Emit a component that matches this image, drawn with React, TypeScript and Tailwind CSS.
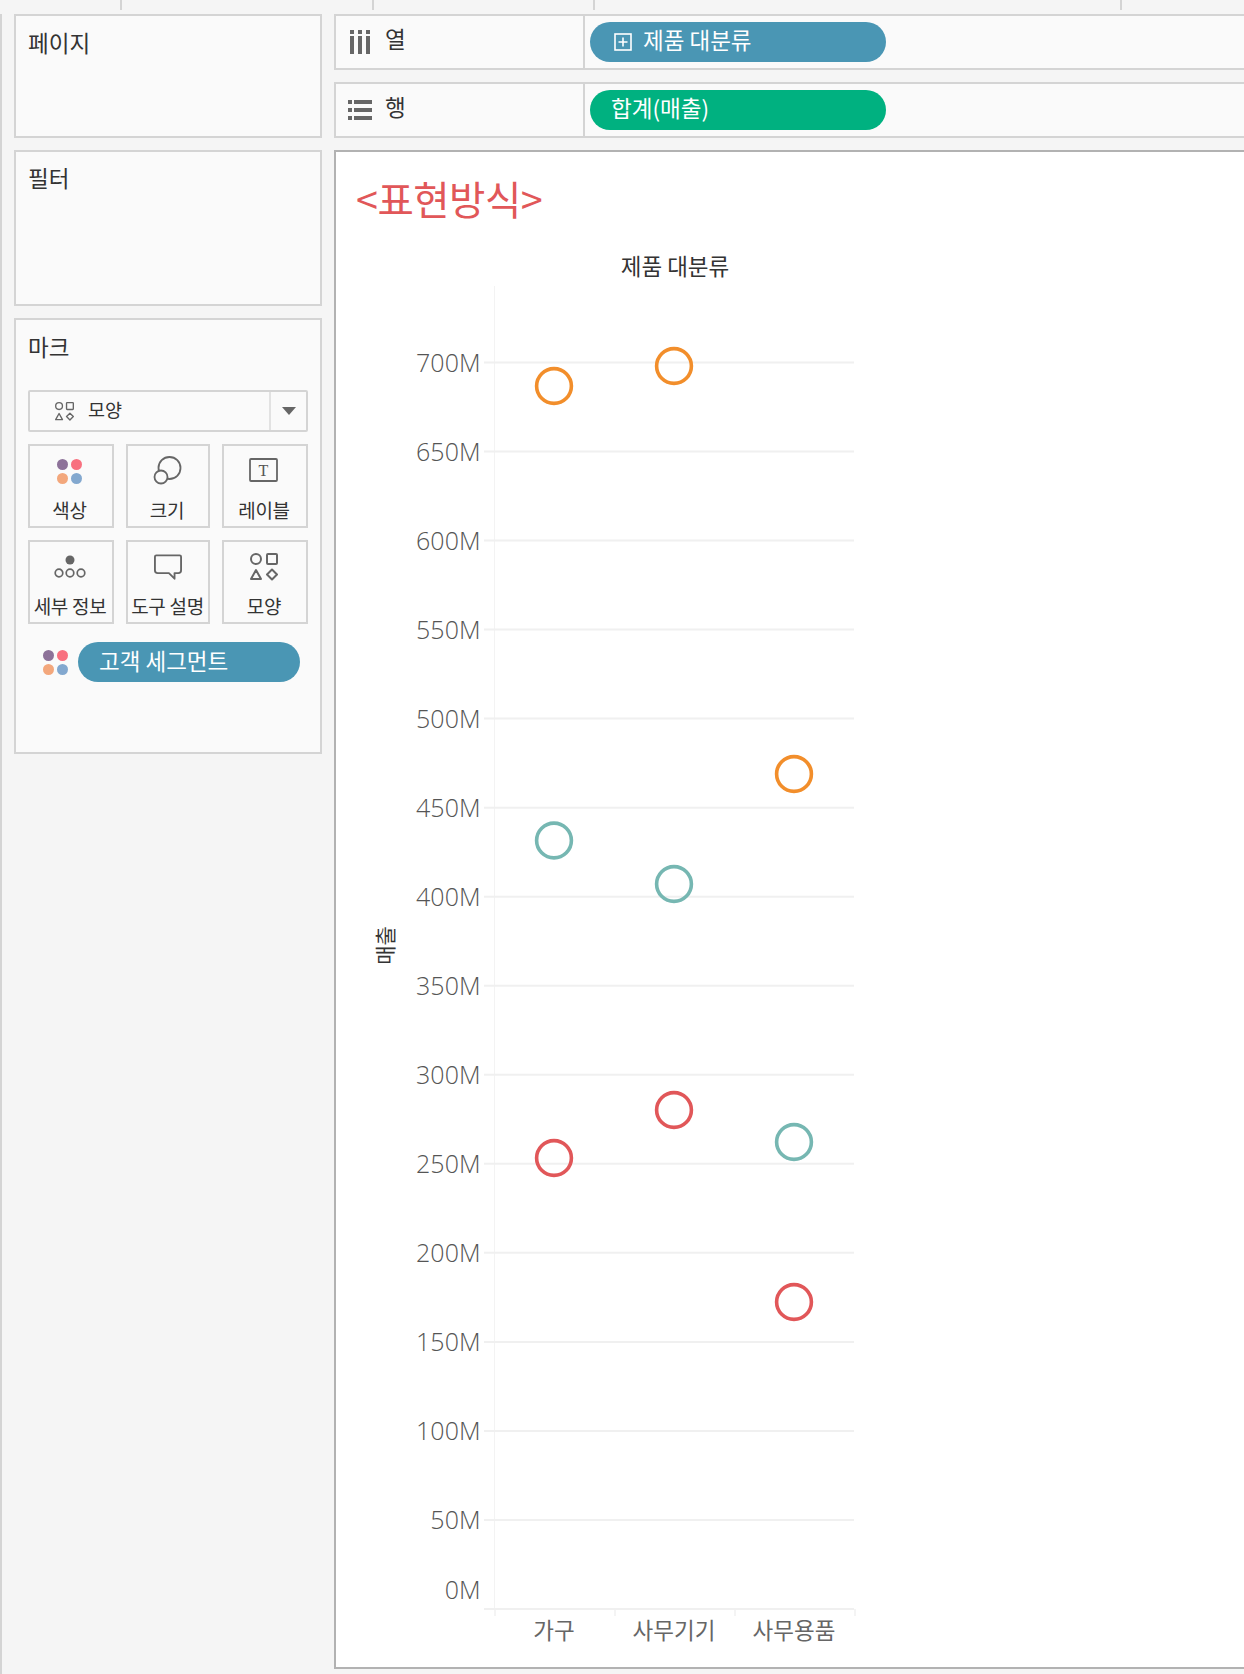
const KR = '"Noto Sans CJK KR", sans-serif';

function Dots({ size = 25 }: { size?: number }) {
  return (
    <svg width={size} height={size} viewBox="0 0 25 25" className="shrink-0">
      <circle cx="5.5" cy="5.5" r="5.5" fill="#8d7299" />
      <circle cx="19.5" cy="5.5" r="5.5" fill="#f8707f" />
      <circle cx="5.5" cy="19.5" r="5.5" fill="#f3a77c" />
      <circle cx="19.5" cy="19.5" r="5.5" fill="#83a8cf" />
    </svg>
  );
}

function SizeIcon() {
  return (
    <svg width="30" height="30" viewBox="0 0 30 30" fill="none" stroke="#666" strokeWidth="1.8">
      <circle cx="17.5" cy="12" r="11" />
      <circle cx="9" cy="21" r="6.5" fill="#fafafa" />
    </svg>
  );
}

function LabelIcon() {
  return (
    <svg width="30" height="26" viewBox="0 0 30 26" fill="none">
      <rect x="1" y="1" width="27" height="22" rx="1" stroke="#666" strokeWidth="1.8" />
      <text x="14.5" y="18" textAnchor="middle" fontSize="16" fill="#555" fontFamily='"Liberation Serif", serif'>T</text>
    </svg>
  );
}

function DetailIcon() {
  return (
    <svg width="32" height="24" viewBox="0 0 32 24" fill="none" stroke="#666" strokeWidth="1.7">
      <circle cx="16" cy="5" r="4.5" fill="#666" stroke="none" />
      <circle cx="5" cy="18" r="3.8" />
      <circle cx="16" cy="18" r="3.8" />
      <circle cx="27" cy="18" r="3.8" />
    </svg>
  );
}

function TooltipIcon() {
  return (
    <svg width="28" height="27" viewBox="0 0 30 28" fill="none" stroke="#666" strokeWidth="2" strokeLinejoin="round">
      <path d="M2.5 1h25a1.5 1.5 0 0 1 1.5 1.5v14.5a3 3 0 0 1-3 3h-4v6l-6-6H4a3 3 0 0 1-3-3V2.5A1.5 1.5 0 0 1 2.5 1Z" />
    </svg>
  );
}

function ShapesIcon({ size = 28 }: { size?: number }) {
  return (
    <svg width={size} height={size} viewBox="0 0 28 28" fill="none" stroke="#666" strokeWidth="2" className="shrink-0">
      <circle cx="6" cy="6" r="5" />
      <rect x="17" y="1" width="10" height="10" rx="1" />
      <path d="M6 17l5 9H1Z" strokeLinejoin="round" />
      <path d="M22 16.5l5 5-5 5-5-5Z" strokeLinejoin="round" />
    </svg>
  );
}

function ColumnsIcon() {
  return (
    <svg width="20" height="24" viewBox="0 0 20 24" fill="#666">
      <rect x="0" y="0" width="4" height="4" />
      <rect x="0" y="6" width="4" height="18" />
      <rect x="8" y="0" width="4" height="4" />
      <rect x="8" y="6" width="4" height="18" />
      <rect x="16" y="0" width="4" height="4" />
      <rect x="16" y="6" width="4" height="18" />
    </svg>
  );
}

function RowsIcon() {
  return (
    <svg width="24" height="20" viewBox="0 0 24 20" fill="#666">
      <rect x="0" y="0" width="4" height="4" />
      <rect x="6" y="0" width="18" height="4" />
      <rect x="0" y="8" width="4" height="4" />
      <rect x="6" y="8" width="18" height="4" />
      <rect x="0" y="16" width="4" height="4" />
      <rect x="6" y="16" width="18" height="4" />
    </svg>
  );
}

function Card({ label, icon, w, pr }: { label: string; icon: React.ReactNode; w: string; pr: string }) {
  return (
    <div className={`${w} ${pr} h-[84px] border-2 border-[#d4d4d4] flex flex-col items-center`}>
      <div className="h-[50px] flex items-center justify-center">{icon}</div>
      <div className="mt-[2px] text-[19px] leading-[24px] text-[#333] whitespace-nowrap tracking-[-0.3px]">{label}</div>
    </div>
  );
}

function Shelf({ icon, label, pill, color, plus }: { icon: React.ReactNode; label: string; pill: string; color: string; plus?: boolean }) {
  return (
    <div className="h-[56px] bg-[#fafafa] border-y-2 border-l-2 border-[#d4d4d4] flex items-stretch">
      <div className="w-[249px] border-r-2 border-[#d4d4d4] flex items-center pl-[12px] gap-[13px]">
        <div className="w-[24px] flex justify-center">{icon}</div>
        <span className="text-[22.5px] text-[#333] pb-[7px]">{label}</span>
      </div>
      <div className="flex items-center pl-[5px]">
        <div className={`${color} w-[296px] h-[40px] rounded-[20px] text-white text-[22.5px] flex items-center ${plus ? 'pl-[24px] gap-[11px]' : 'pl-[21px]'}`}>
          {plus && (
            <svg width="18" height="18" viewBox="0 0 18 18" fill="none" stroke="#fff" strokeWidth="1.6">
              <rect x="1" y="1" width="16" height="16" />
              <path d="M9 4.5v9M4.5 9h9" />
            </svg>
          )}
          <span className="pb-[4px]">{pill}</span>
        </div>
      </div>
    </div>
  );
}

const TICKS = [700, 650, 600, 550, 500, 450, 400, 350, 300, 250, 200, 150, 100, 50, 0];
const OFFSET_Y = 240;
const OFFSET_X = 336;
const yOf = (v: number) => 1609 - (v * 89.04) / 50 - OFFSET_Y;

const POINTS: { cx: number; cy: number; c: string }[] = [
  { cx: 554, cy: 386, c: '#f28e2b' },
  { cx: 674, cy: 366, c: '#f28e2b' },
  { cx: 794, cy: 774, c: '#f28e2b' },
  { cx: 554, cy: 840.5, c: '#76b7b2' },
  { cx: 674, cy: 884, c: '#76b7b2' },
  { cx: 794, cy: 1142, c: '#76b7b2' },
  { cx: 554, cy: 1158, c: '#e15759' },
  { cx: 674, cy: 1110, c: '#e15759' },
  { cx: 794, cy: 1302, c: '#e15759' },
];

function Chart() {
  const x = (v: number) => v - OFFSET_X;
  const y = (v: number) => v - OFFSET_Y;
  return (
    <svg width="560" height="1427" viewBox="0 0 560 1427" className="block">
      <line x1={x(494.5)} x2={x(494.5)} y1={y(286)} y2={y(1608)} stroke="#f3f3f3" strokeWidth="1" />
      {TICKS.map((t) => (
        <g key={t}>
          <line x1={x(484)} x2={x(854)} y1={yOf(t)} y2={yOf(t)} stroke="#f0f0f0" strokeWidth="2" />
          <text x={x(480.5)} y={yOf(t) + (t === 0 ? -10 : 9.5)} textAnchor="end" fontSize="25" fontWeight="300" fill="#555" fontFamily='"Open Sans", sans-serif'>
            {t}M
          </text>
        </g>
      ))}
      {[495, 615, 735, 855].map((v) => (
        <line key={v} x1={x(v)} x2={x(v)} y1={y(1609)} y2={y(1616)} stroke="#f0f0f0" strokeWidth="1.5" />
      ))}
      {POINTS.map((p, i) => (
        <circle key={i} cx={x(p.cx)} cy={y(p.cy)} r="17.4" fill="none" stroke={p.c} strokeWidth="3.6" />
      ))}
      <text x={x(675)} y={y(275)} textAnchor="middle" fontSize="22.5" fill="#333" fontFamily={KR}>제품 대분류</text>
      <text x={x(554)} y={y(1639)} textAnchor="middle" fontSize="22.5" fill="#666" fontFamily={KR}>가구</text>
      <text x={x(674)} y={y(1639)} textAnchor="middle" fontSize="22.5" fill="#666" fontFamily={KR}>사무기기</text>
      <text x={x(794)} y={y(1639)} textAnchor="middle" fontSize="22.5" fill="#666" fontFamily={KR}>사무용품</text>
      <text transform={`translate(${x(393)} ${y(945.5)}) rotate(-90)`} textAnchor="middle" fontSize="21" fill="#333" fontFamily={KR}>매출</text>
    </svg>
  );
}

export default function App() {
  return (
    <div className="w-[1244px] h-[1674px] bg-[#f5f5f5] overflow-hidden" style={{ fontFamily: KR }}>
      <div className="h-[14px] flex items-start">
        <div className="w-[122px] h-[10px] border-r-2 border-[#d4d4d4]" />
        <div className="w-[252px] h-[10px] border-r-2 border-[#d4d4d4]" />
        <div className="w-[221px] h-[10px] border-r-2 border-[#d4d4d4]" />
        <div className="w-[527px] h-[10px] border-r-2 border-[#d4d4d4]" />
      </div>
      <div className="h-[1660px] border-l-2 border-[#d4d4d4] pl-[12px] flex gap-[12px]">
        <div className="w-[308px] shrink-0 flex flex-col gap-[12px]">
          <div className="h-[124px] bg-[#fafafa] border-2 border-[#d4d4d4] pl-[12px] pt-[11px] text-[22.5px] leading-[30px] text-[#333]">페이지</div>
          <div className="h-[156px] bg-[#fafafa] border-2 border-[#d4d4d4] pl-[12px] pt-[10px] text-[22.5px] leading-[30px] text-[#333]">필터</div>
          <div className="h-[436px] bg-[#fafafa] border-2 border-[#d4d4d4] pl-[12px] pt-[11px]">
            <div className="text-[22.5px] text-[#333] leading-[30px]">마크</div>
            <div className="mt-[29px] w-[280px] h-[42px] border-2 border-[#d4d4d4] rounded-[2px] flex items-stretch">
              <div className="flex-1 flex items-center pl-[25px] gap-[14px] border-r-2 border-[#e2e2e2]">
                <ShapesIcon size={19} />
                <span className="text-[18.5px] text-[#333] pb-[2px]">모양</span>
              </div>
              <div className="w-[35px] flex items-center justify-center">
                <svg width="14" height="8" viewBox="0 0 14 8"><path d="M0 0h14L7 8Z" fill="#666" /></svg>
              </div>
            </div>
            <div className="mt-[12px] flex flex-col gap-[12px]">
              <div className="flex gap-[12px]">
                <Card w="w-[86px]" pr="pr-[3px]" label="색상" icon={<Dots />} />
                <Card w="w-[84px]" pr="pr-[2px]" label="크기" icon={<SizeIcon />} />
                <Card w="w-[86px]" pr="pr-[2px]" label="레이블" icon={<LabelIcon />} />
              </div>
              <div className="flex gap-[12px]">
                <Card w="w-[86px]" pr="pr-[2px]" label="세부 정보" icon={<DetailIcon />} />
                <Card w="w-[84px]" pr="pr-[1px]" label="도구 설명" icon={<TooltipIcon />} />
                <Card w="w-[86px]" pr="pr-[2px]" label="모양" icon={<ShapesIcon />} />
              </div>
            </div>
            <div className="mt-[18px] pl-[15px] flex items-center gap-[10px]">
              <Dots />
              <div className="w-[222px] h-[40px] rounded-[20px] bg-[#4a96b4] text-white text-[22.5px] flex items-center pl-[21px]">
                <span className="pb-[3px]">고객 세그먼트</span>
              </div>
            </div>
          </div>
        </div>
        <div className="flex-1 min-w-0 flex flex-col gap-[12px]">
          <Shelf icon={<ColumnsIcon />} label="열" pill="제품 대분류" color="bg-[#4a96b4]" plus />
          <Shelf icon={<RowsIcon />} label="행" pill="합계(매출)" color="bg-[#00b180]" />
          <div className="h-[1519px] bg-white border-y-2 border-l-2 border-[#b2b2b2]">
            <div className="h-[88px] pl-[20px] pt-[23px] text-[39.5px] leading-[46px] text-[#e15759] tracking-[-0.5px]">&lt;표현방식&gt;</div>
            <Chart />
          </div>
        </div>
      </div>
    </div>
  );
}
